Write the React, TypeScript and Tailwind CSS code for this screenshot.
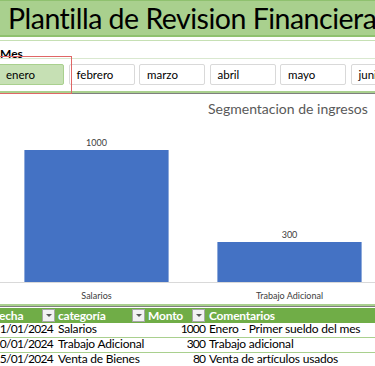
import React from 'react';

const months = ['enero', 'febrero', 'marzo', 'abril', 'mayo', 'junio'];

const rows = [
  { fecha: '1/01/2024', cat: 'Salarios', monto: '1000', com: 'Enero - Primer sueldo del mes' },
  { fecha: '10/01/2024', cat: 'Trabajo Adicional', monto: '300', com: 'Trabajo adicional' },
  { fecha: '15/01/2024', cat: 'Venta de Bienes', monto: '80', com: 'Venta de artículos usados' },
];

const bars = [
  { label: 'Salarios', value: 1000 },
  { label: 'Trabajo Adicional', value: 300 },
];

function Drop() {
  return (
    <span className="w-[13px] h-[13px] shrink-0 border border-[#a6a6a6] bg-[#f2f2f2] flex items-center justify-center">
      <span className="w-0 h-0 border-l-[3px] border-r-[3px] border-t-[3px] border-l-transparent border-r-transparent border-t-[#595959]" />
    </span>
  );
}

export default function App() {
  return (
    <div className="w-[375px] h-[366px] overflow-hidden bg-white font-['Lato',sans-serif] text-black">
      {/* titulo */}
      <div className="h-[37px] bg-[#a9d08e] border-t border-b-2 border-[#8fc16f] pl-[8px] flex items-center whitespace-nowrap">
        <span className="text-[28.5px] tracking-[-0.5px] leading-none">Plantilla de Revision Financiera</span>
      </div>

      {/* slicer */}
      <div className="relative mt-[3px] border-t border-[#c6e0b4] h-[53px] border-b-2 border-b-[#a9d08e]">
        <div className="text-[12px] font-bold leading-none pt-[7px] h-[18px] border-b border-[#d9e8cf]">Mes</div>
        <div className="flex gap-[4.5px] mt-[5px] ml-[-2px] whitespace-nowrap">
          {months.map((m, i) => (
            <div
              key={m}
              className={
                i === 0
                  ? 'w-[66px] h-[21px] shrink-0 rounded-[2px] border border-[#a9d08e] bg-[#c6e0b4] text-[11.5px] pl-[7px] flex items-center'
                  : 'w-[66px] h-[21px] shrink-0 rounded-[2px] border border-[#d9d9d9] bg-white text-[11.5px] pl-[7px] flex items-center'
              }
            >
              {m}
            </div>
          ))}
        </div>
        <div className="absolute left-[-2px] top-[15px] w-[74px] h-[38px] border border-[#e06666]" />
      </div>
      <div className="h-[1px] bg-[#7f7f7f]" />

      {/* grafico */}
      <div className="h-[212px] border-b-2 border-[#a9d08e] relative">
        <div className="pl-[208px] pt-[6px] text-[14px] text-[#595959] whitespace-nowrap leading-[17px]">
          Segmentacion de ingresos
        </div>
        <div className="flex h-[163px] items-end border-b border-[#d9d9d9] mt-[3px]">
          {bars.map((b) => (
            <div key={b.label} className="w-[193px] shrink-0 flex flex-col items-center">
              <span className="text-[9px] text-[#404040] leading-none mb-[3px]">{b.value}</span>
              <div className="w-[145px] bg-[#4472c4] border-x border-[#8eaadb]" style={{ height: (b.value / 1000) * 132 }} />
            </div>
          ))}
        </div>
        <div className="flex mt-[8px]">
          {bars.map((b) => (
            <div key={b.label} className="w-[193px] shrink-0 text-center text-[9px] text-[#404040] leading-none">
              {b.label}
            </div>
          ))}
        </div>
      </div>
      <div className="h-[1px] bg-[#7f7f7f]" />

      {/* tabla */}
      <div className="mt-[1px] ml-[-12px] text-[12px] tracking-[-0.2px] leading-none whitespace-nowrap">
        <div className="flex h-[15px] bg-[#70ad47] text-white font-bold items-center">
          <div className="w-[68px] shrink-0 flex items-center justify-between pl-[5px] pr-[1px]">
            <span>Fecha</span>
            <Drop />
          </div>
          <div className="w-[90px] shrink-0 flex items-center justify-between pl-[2px] pr-[1px]">
            <span>categoría</span>
            <Drop />
          </div>
          <div className="w-[61px] shrink-0 flex items-center justify-between pl-[2px] pr-[2px]">
            <span>Monto</span>
            <Drop />
          </div>
          <div className="pl-[2px]">Comentarios</div>
        </div>
        {rows.map((r) => (
          <div key={r.fecha} className="flex h-[15px] items-end pb-[2px] border-b border-[#a9d08e]">
            <div className="w-[68px] shrink-0 text-right pr-[3px] tracking-[-0.7px]">{r.fecha}</div>
            <div className="w-[90px] shrink-0 pl-[2px]">{r.cat}</div>
            <div className="w-[61px] shrink-0 text-right pr-[2px] tracking-[-0.9px]">{r.monto}</div>
            <div className="pl-[2px]">{r.com}</div>
          </div>
        ))}
      </div>
    </div>
  );
}
